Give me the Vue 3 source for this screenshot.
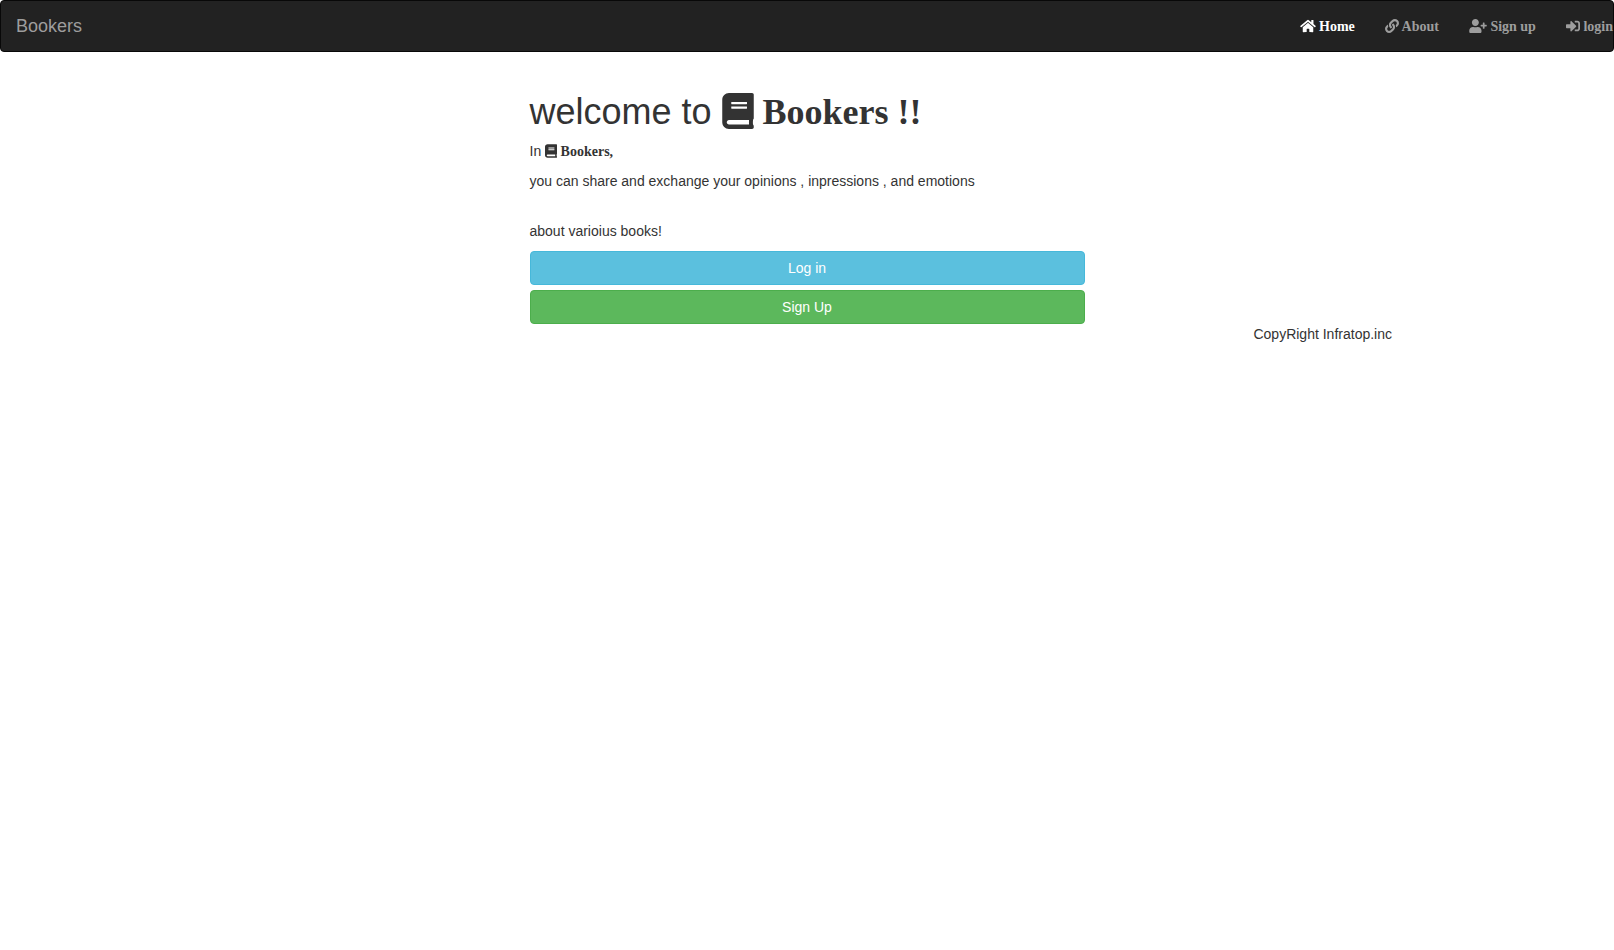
<script setup>
const icons = {
  home: {
    box: '0 0 576 512',
    size: 'w16',
    d: 'M280.37 148.26L96 300.11V464a16 16 0 0 0 16 16l112.06-.29a16 16 0 0 0 15.92-16V368a16 16 0 0 1 16-16h64a16 16 0 0 1 16 16v95.64a16 16 0 0 0 16 16.05L464 480a16 16 0 0 0 16-16V300L295.67 148.26a12.19 12.19 0 0 0-15.3 0zM571.6 251.47L488 182.56V44.05a12 12 0 0 0-12-12h-56a12 12 0 0 0-12 12v72.61L318.47 43a48 48 0 0 0-61 0L4.34 251.47a12 12 0 0 0-1.6 16.9l25.5 31A12 12 0 0 0 45.15 301l235.22-193.74a12.19 12.19 0 0 1 15.3 0L530.9 301a12 12 0 0 0 16.9-1.6l25.5-31a12 12 0 0 0-1.7-16.93z',
  },
  link: {
    box: '0 0 512 512',
    size: 'w14',
    d: 'M326.612 185.391c59.747 59.809 58.927 155.698.36 214.59-.11.12-.24.25-.36.37l-67.2 67.2c-59.27 59.27-155.699 59.262-214.96 0-59.27-59.26-59.27-155.7 0-214.96l37.106-37.106c9.84-9.84 26.786-3.3 27.294 10.606.648 17.722 3.826 35.527 9.69 52.721 1.986 5.822.567 12.262-3.783 16.612l-13.087 13.087c-28.026 28.026-28.905 73.66-1.155 101.96 28.024 28.579 74.086 28.749 102.325.51l67.2-67.19c28.191-28.191 28.073-73.757 0-101.83-3.701-3.694-7.429-6.564-10.341-8.569a16.037 16.037 0 0 1-6.947-12.606c-.396-10.567 3.348-21.456 11.698-29.806l21.054-21.055c5.521-5.521 14.182-6.199 20.584-1.731a152.482 152.482 0 0 1 20.522 17.197zM467.547 44.449c-59.261-59.262-155.69-59.27-214.96 0l-67.2 67.2c-.12.12-.25.25-.36.37-58.566 58.892-59.387 154.781.36 214.59a152.454 152.454 0 0 0 20.521 17.196c6.402 4.468 15.064 3.789 20.584-1.731l21.054-21.055c8.35-8.35 12.094-19.239 11.698-29.806a16.037 16.037 0 0 0-6.947-12.606c-2.912-2.005-6.64-4.875-10.341-8.569-28.073-28.073-28.191-73.639 0-101.83l67.2-67.19c28.239-28.239 74.3-28.069 102.325.51 27.75 28.3 26.872 73.934-1.155 101.96l-13.087 13.087c-4.35 4.35-5.769 10.79-3.783 16.612 5.864 17.194 9.042 34.999 9.69 52.721.509 13.906 17.454 20.446 27.294 10.606l37.106-37.106c59.271-59.259 59.271-155.699.001-214.959z',
  },
  userPlus: {
    box: '0 0 640 512',
    size: 'w18',
    d: 'M624 208h-64v-64c0-8.8-7.2-16-16-16h-32c-8.8 0-16 7.2-16 16v64h-64c-8.8 0-16 7.2-16 16v32c0 8.8 7.2 16 16 16h64v64c0 8.8 7.2 16 16 16h32c8.8 0 16-7.2 16-16v-64h64c8.8 0 16-7.2 16-16v-32c0-8.8-7.2-16-16-16zm-400 48c70.7 0 128-57.3 128-128S294.7 0 224 0 96 57.3 96 128s57.3 128 128 128zm89.6 32h-16.7c-22.2 10.2-46.9 16-72.9 16s-50.6-5.8-72.9-16h-16.7C60.2 288 0 348.2 0 422.4V464c0 26.5 21.5 48 48 48h352c26.5 0 48-21.5 48-48v-41.6c0-74.2-60.2-134.4-134.4-134.4z',
  },
  signIn: {
    box: '0 0 512 512',
    size: 'w14',
    d: 'M416 448h-84c-6.6 0-12-5.4-12-12v-40c0-6.6 5.4-12 12-12h84c17.7 0 32-14.3 32-32V160c0-17.7-14.3-32-32-32h-84c-6.6 0-12-5.4-12-12V76c0-6.6 5.4-12 12-12h84c53 0 96 43 96 96v192c0 53-43 96-96 96zm-47-201L201 79c-15-15-41-4.5-41 17v96H24c-13.3 0-24 10.7-24 24v96c0 13.3 10.7 24 24 24h136v96c0 21.5 26 32 41 17l168-168c9.3-9.4 9.3-24.6 0-34z',
  },
  book: {
    box: '0 0 448 512',
    d: 'M448 360V24c0-13.3-10.7-24-24-24H96C43 0 0 43 0 96v320c0 53 43 96 96 96h328c13.3 0 24-10.7 24-24v-16c0-7.5-3.5-14.3-8.9-18.7-4.2-15.4-4.2-59.3 0-74.7 5.4-4.3 8.9-11.1 8.9-18.6zM128 134c0-3.3 2.7-6 6-6h212c3.3 0 6 2.7 6 6v20c0 3.3-2.7 6-6 6H134c-3.3 0-6-2.7-6-6v-20zm0 64c0-3.3 2.7-6 6-6h212c3.3 0 6 2.7 6 6v20c0 3.3-2.7 6-6 6H134c-3.3 0-6-2.7-6-6v-20zm253.4 250H96c-17.7 0-32-14.3-32-32 0-17.6 14.4-32 32-32h285.4c-1.9 17.1-1.9 46.9 0 64z',
  },
}

const links = [
  { label: 'Home', icon: icons.home, active: true },
  { label: 'About', icon: icons.link },
  { label: 'Sign up', icon: icons.userPlus },
  { label: 'login', icon: icons.signIn },
]
</script>

<template>
  <div class="page">
    <header class="navbar">
      <a class="brand" href="#">Bookers</a>
      <nav>
        <ul class="menu">
          <li v-for="item in links" :key="item.label">
            <a href="#" class="menu-link" :class="{ active: item.active }">
              <span class="mark"><svg class="icon" :class="item.icon.size" :viewBox="item.icon.box" aria-hidden="true"><path :d="item.icon.d" /></svg> {{ item.label }}</span>
            </a>
          </li>
        </ul>
      </nav>
    </header>

    <div class="container">
      <main class="content">
        <h1>
          welcome to
          <span class="mark"><svg class="icon w32" :viewBox="icons.book.box" aria-hidden="true"><path :d="icons.book.d" /></svg> Bookers !!</span>
        </h1>
        <p>
          In
          <span class="mark"><svg class="icon w12" :viewBox="icons.book.box" aria-hidden="true"><path :d="icons.book.d" /></svg> Bookers,</span>
        </p>
        <p class="lead-in">you can share and exchange your opinions , inpressions , and emotions</p>
        <p>about varioius books!</p>
        <div class="actions">
          <a href="#" class="btn info">Log in</a>
          <a href="#" class="btn success">Sign Up</a>
        </div>
      </main>
      <footer class="footer">CopyRight Infratop.inc</footer>
    </div>
  </div>
</template>

<style>
body {
  margin: 0;
  background: #fff;
}
</style>

<style scoped>
.page {
  font-family: "Liberation Sans", Arial, sans-serif;
  font-size: 14px;
  line-height: 20px;
  color: #333;
}

.page *,
.page {
  box-sizing: border-box;
}

a {
  text-decoration: none;
}

.navbar {
  display: flex;
  justify-content: space-between;
  min-height: 52px;
  margin-bottom: 20px;
  background: #222;
  border: 1px solid #080808;
  border-radius: 4px;
}

.brand {
  padding: 15px;
  font-size: 18px;
  color: #9d9d9d;
}

.menu {
  display: flex;
  margin: 0;
  padding: 0;
  list-style: none;
}

.menu-link {
  display: block;
  padding: 15px;
  color: #9d9d9d;
  white-space: nowrap;
}

.menu li:last-child .menu-link {
  padding-right: 0;
}

.menu-link.active,
.menu-link:hover,
.brand:hover {
  color: #fff;
}

.icon {
  height: 1em;
  fill: currentColor;
  vertical-align: -2px;
}

.w12 {
  width: 12px;
}

.w14 {
  width: 14px;
}

.w16 {
  width: 16px;
}

.w18 {
  width: 18px;
}

.w32 {
  width: 32px;
}

.container {
  max-width: 1170px;
  margin: 0 auto;
}

.content {
  width: 50%;
  margin: 0 auto;
  padding: 20px 15px 0;
}

h1 {
  margin: 0 0 10px;
  font-size: 36px;
  line-height: 39px;
  font-weight: 500;
}

h1 .icon {
  vertical-align: -5px;
}

.mark {
  font-family: "Liberation Serif", "Times New Roman", serif;
  font-weight: 700;
  line-height: 1;
}

p {
  margin: 0 0 10px;
}

.lead-in {
  margin-bottom: 30px;
}

.actions {
  display: grid;
  gap: 5px;
}

.btn {
  padding: 6px 12px;
  border: 1px solid transparent;
  border-radius: 4px;
  color: #fff;
  text-align: center;
}

.info {
  background: #5bc0de;
  border-color: #46b8da;
}

.success {
  background: #5cb85c;
  border-color: #4cae4c;
}

.footer {
  text-align: right;
}
</style>
